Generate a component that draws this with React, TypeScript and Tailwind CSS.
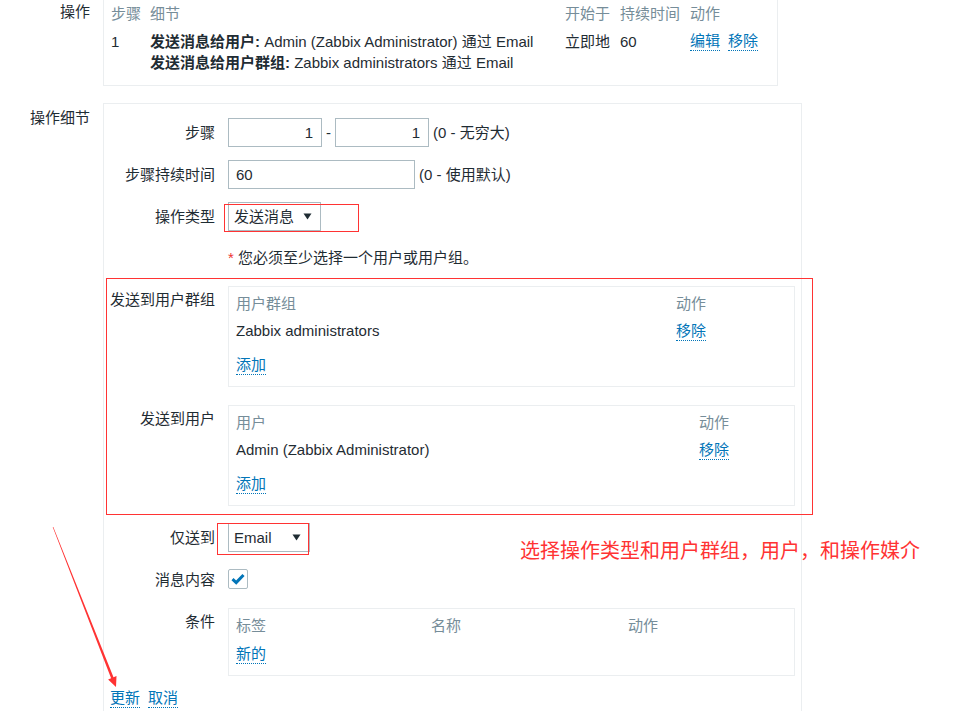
import React from "react";

const FONT = { fontFamily: '"Liberation Sans", "Noto Sans CJK SC", sans-serif' };

function Link({ children }: { children: React.ReactNode }) {
  return (
    <span className="inline-block leading-[19px] text-[#0275b8] border-b border-dotted border-[#0275b8]">
      {children}
    </span>
  );
}

function Arrow() {
  return (
    <svg width="9" height="7" viewBox="0 0 9 7" className="shrink-0">
      <path d="M0.5 0.5 H8.5 L4.5 6.5 Z" fill="#1f2c33" />
    </svg>
  );
}

function Label({ children, pt = "pt-[4px]" }: { children: React.ReactNode; pt?: string }) {
  return <div className={`w-[105px] shrink-0 text-right leading-[21px] ${pt}`}>{children}</div>;
}

export default function App() {
  return (
    <div
      className="relative w-[973px] h-[711px] overflow-hidden bg-white text-[15px] leading-[21px] text-[#1f2c33]"
      style={FONT}
    >
      {/* 操作 */}
      <div className="flex">
        <div className="w-[90px] shrink-0 text-right pt-[1px]">操作</div>
        <div className="ml-[13px] w-[675px] border-x border-b border-[#ebeef0] pl-[7px] pt-[3px] pb-[12px]">
          <div className="grid grid-cols-[39px_415px_55px_70px_1fr] text-[#768d99]">
            <div>步骤</div>
            <div>细节</div>
            <div>开始于</div>
            <div>持续时间</div>
            <div>动作</div>
          </div>
          <div className="grid grid-cols-[39px_415px_55px_70px_1fr] mt-[7px]">
            <div>1</div>
            <div>
              <div>
                <span className="font-bold">发送消息给用户:</span> Admin (Zabbix Administrator) 通过 Email
              </div>
              <div>
                <span className="font-bold">发送消息给用户群组:</span> Zabbix administrators 通过 Email
              </div>
            </div>
            <div>立即地</div>
            <div>60</div>
            <div className="flex gap-[8px] items-start">
              <Link>编辑</Link>
              <Link>移除</Link>
            </div>
          </div>
        </div>
      </div>

      {/* 操作细节 */}
      <div className="flex mt-[17px]">
        <div className="w-[90px] shrink-0 text-right pt-[4px]">操作细节</div>
        <div className="ml-[13px] w-[699px] h-[620px] border-x border-t border-[#ebeef0] px-[6px] pt-[14px]">
          <div className="flex flex-col">
            {/* 步骤 */}
            <div className="flex items-start">
              <Label>步骤</Label>
              <div className="ml-[13px] flex items-center h-[29px]">
                <div className="w-[94px] h-[29px] border border-[#acbbc2] text-right pr-[8px] leading-[27px]">1</div>
                <span className="w-[13px] text-center">-</span>
                <div className="w-[94px] h-[29px] border border-[#acbbc2] text-right pr-[8px] leading-[27px]">1</div>
                <span className="ml-[4px]">(0 - 无穷大)</span>
              </div>
            </div>
            {/* 步骤持续时间 */}
            <div className="flex items-start mt-[13px]">
              <Label>步骤持续时间</Label>
              <div className="ml-[13px] flex items-center h-[29px]">
                <div className="w-[187px] h-[29px] border border-[#acbbc2] pl-[7px] leading-[27px]">60</div>
                <span className="ml-[4px]">(0 - 使用默认)</span>
              </div>
            </div>
            {/* 操作类型 */}
            <div className="flex items-start mt-[13px]">
              <Label>操作类型</Label>
              <div className="ml-[13px]">
                <div className="w-[93px] h-[29px] border border-[#acbbc2] pl-[5px] pr-[8px] flex items-center justify-between">
                  <span>发送消息</span>
                  <Arrow />
                </div>
              </div>
            </div>
            {/* error */}
            <div className="flex items-start mt-[16px]">
              <div className="w-[105px] shrink-0" />
              <div className="ml-[13px]">
                <span className="text-[#e33]">*</span> 您必须至少选择一个用户或用户组。
              </div>
            </div>
            {/* 发送到用户群组 */}
            <div className="flex items-start mt-[18px]">
              <Label pt="pt-[3px]">发送到用户群组</Label>
              <div className="ml-[13px] flex-1 border border-[#ebeef0] pl-[7px] pt-[6px] pb-[11px]">
                <div className="grid grid-cols-[440px_1fr] text-[#768d99]">
                  <div>用户群组</div>
                  <div>动作</div>
                </div>
                <div className="grid grid-cols-[440px_1fr] mt-[6px]">
                  <div>Zabbix administrators</div>
                  <div>
                    <Link>移除</Link>
                  </div>
                </div>
                <div className="mt-[13px]">
                  <Link>添加</Link>
                </div>
              </div>
            </div>
            {/* 发送到用户 */}
            <div className="flex items-start mt-[18px]">
              <Label pt="pt-[3px]">发送到用户</Label>
              <div className="ml-[13px] flex-1 border border-[#ebeef0] pl-[7px] pt-[6px] pb-[11px]">
                <div className="grid grid-cols-[463px_1fr] text-[#768d99]">
                  <div>用户</div>
                  <div>动作</div>
                </div>
                <div className="grid grid-cols-[463px_1fr] mt-[6px]">
                  <div>Admin (Zabbix Administrator)</div>
                  <div>
                    <Link>移除</Link>
                  </div>
                </div>
                <div className="mt-[13px]">
                  <Link>添加</Link>
                </div>
              </div>
            </div>
            {/* 仅送到 */}
            <div className="flex items-start mt-[17px]">
              <Label>仅送到</Label>
              <div className="ml-[13px]">
                <div className="w-[82px] h-[29px] border border-[#acbbc2] pl-[5px] pr-[8px] flex items-center justify-between">
                  <span>Email</span>
                  <Arrow />
                </div>
              </div>
            </div>
            {/* 消息内容 */}
            <div className="flex items-start mt-[17px]">
              <Label pt="pt-0">消息内容</Label>
              <div className="ml-[13px]">
                <div className="w-[20px] h-[20px] border border-[#acbbc2] rounded-[2px] flex items-center justify-center">
                  <svg width="14" height="12" viewBox="0 0 14 12">
                    <path d="M1.5 6.2 L5.2 9.6 L12.5 2" fill="none" stroke="#0275b8" strokeWidth="3" />
                  </svg>
                </div>
              </div>
            </div>
            {/* 条件 */}
            <div className="flex items-start mt-[18px]">
              <Label pt="pt-[3px]">条件</Label>
              <div className="ml-[13px] flex-1 border border-[#ebeef0] pl-[7px] pt-[6px] pb-[11px]">
                <div className="grid grid-cols-[195px_197px_1fr] text-[#768d99]">
                  <div>标签</div>
                  <div>名称</div>
                  <div>动作</div>
                </div>
                <div className="mt-[7px]">
                  <Link>新的</Link>
                </div>
              </div>
            </div>
            {/* buttons */}
            <div className="flex gap-[8px] mt-[12px]">
              <Link>更新</Link>
              <Link>取消</Link>
            </div>
          </div>
        </div>
      </div>

      {/* annotations */}
      <div className="absolute left-[224px] top-[204px] w-[135px] h-[28px] border border-[#f33]" />
      <div className="absolute left-[106px] top-[278px] w-[707px] h-[237px] border border-[#f33]" />
      <div className="absolute left-[217px] top-[523px] w-[92px] h-[32px] border border-[#f33]" />
      <div
        className="absolute left-[520px] top-[536px] text-[20px] leading-[28px] text-[#f33] whitespace-nowrap"
        style={{ fontFamily: '"Noto Sans CJK SC", sans-serif' }}
      >
        选择操作类型和用户群组，用户，和操作媒介
      </div>
      <svg className="absolute left-0 top-0 pointer-events-none" width="973" height="711">
        <polygon
          points="52.7,527.1 111.1,678.2 108.1,679.4 116,687 116.5,676.1 113.5,677.2 53.3,526.9"
          fill="#f33"
        />
      </svg>
    </div>
  );
}
